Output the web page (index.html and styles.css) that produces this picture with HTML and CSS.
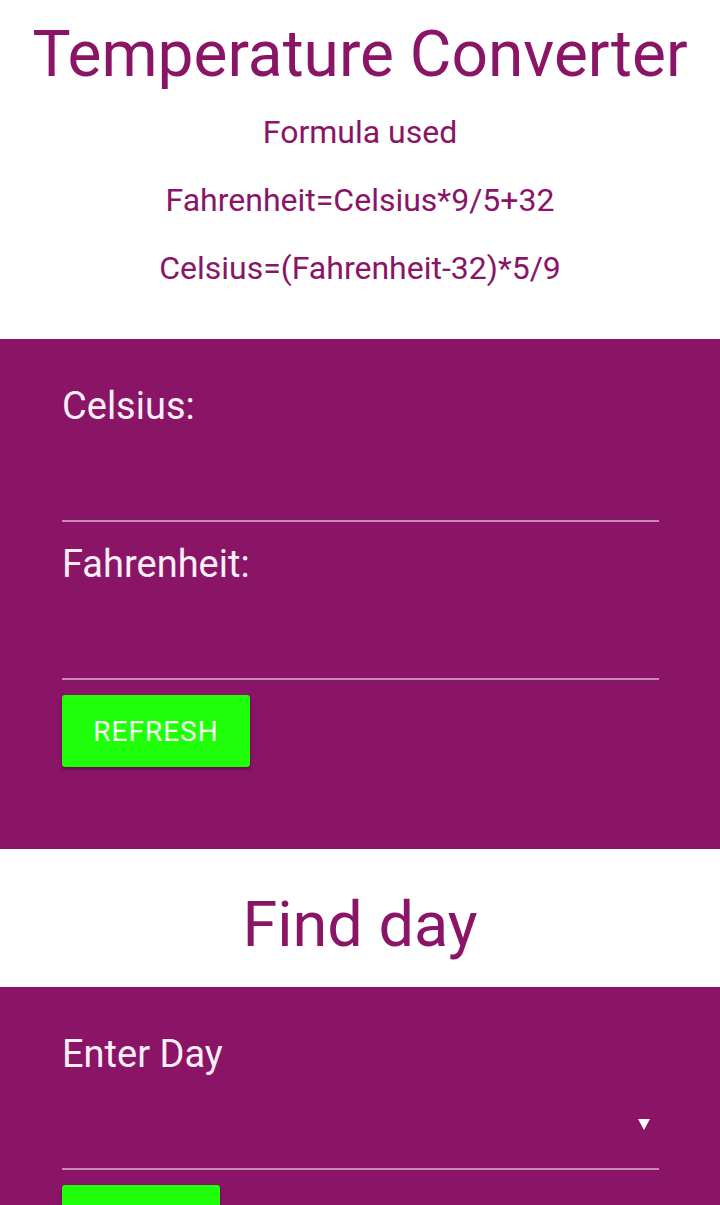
FILE: index.html
```html
<!DOCTYPE html>
<html>
<head>
<meta charset="utf-8">
<link rel="stylesheet" href="styles.css">
</head>
<body>
<header class="intro">
  <h1 class="title">Temperature Converter</h1>
  <p class="formula first">Formula used</p>
  <p class="formula">Fahrenheit=Celsius*9/5+32</p>
  <p class="formula">Celsius=(Fahrenheit-32)*5/9</p>
</header>
<section class="panel converter">
  <label class="field">
    <span class="label">Celsius:</span>
    <span class="input"></span>
  </label>
  <label class="field">
    <span class="label">Fahrenheit:</span>
    <span class="input"></span>
  </label>
  <button class="btn">REFRESH</button>
</section>
<section class="heading2">
  <h2 class="title2">Find day</h2>
</section>
<section class="panel day">
  <label class="field">
    <span class="label">Enter Day</span>
    <span class="input select"><span class="arrow"></span></span>
  </label>
  <button class="btn btn2" aria-label="Find"></button>
</section>
</body>
</html>
```
FILE: styles.css
```css
html, body {
  margin: 0;
  padding: 0;
  background: #ffffff;
  font-family: Roboto, "Noto Sans", sans-serif;
  overflow: hidden;
  height: 1205px;
}
.intro {
  display: flex;
  flex-direction: column;
  align-items: center;
  height: 339px;
  box-sizing: border-box;
  padding-top: 17px;
  color: #8a1466;
}
.title {
  margin: 0;
  font-weight: 400;
  font-size: 64px;
  line-height: 76px;
  color: #8a1466;
}
.formula {
  margin: 30px 0 0;
  font-size: 32px;
  line-height: 38px;
}
.formula.first {
  margin-top: 20px;
}
.panel {
  background: #8a1466;
  padding: 44px 61px 0 62px;
  display: flex;
  flex-direction: column;
  align-items: flex-start;
}
.converter {
  height: 510px;
  box-sizing: border-box;
}
.field {
  display: flex;
  flex-direction: column;
  align-self: stretch;
  margin-bottom: 19px;
}
.label {
  font-size: 38px;
  line-height: 46px;
  color: #fbeef7;
}
.input {
  height: 93px;
  box-sizing: border-box;
  border-bottom: 2px solid rgba(255,255,255,0.5);
  display: flex;
  justify-content: flex-end;
  align-items: flex-start;
}
.field:last-of-type {
  margin-bottom: 15px;
}
.btn {
  width: 188px;
  height: 72px;
  background: #20ff0a;
  border: none;
  border-radius: 3px;
  box-shadow: 0 2px 3px rgba(0,0,0,0.35);
  color: #f2fdee;
  font-family: Roboto, sans-serif;
  font-size: 28px;
  letter-spacing: 1px;
  padding: 0;
}
.heading2 {
  height: 138px;
  box-sizing: border-box;
  padding-top: 38px;
  display: flex;
  justify-content: center;
  align-items: flex-start;
}
.title2 {
  margin: 0;
  font-weight: 400;
  font-size: 63px;
  line-height: 76px;
  color: #8a1466;
}
.day {
  height: 300px;
}
.arrow {
  width: 0;
  height: 0;
  border-left: 6px solid transparent;
  border-right: 6px solid transparent;
  border-top: 11px solid #ffffff;
  margin-top: 42px;
  margin-right: 9px;
}
.btn2 {
  width: 158px;
}
```
